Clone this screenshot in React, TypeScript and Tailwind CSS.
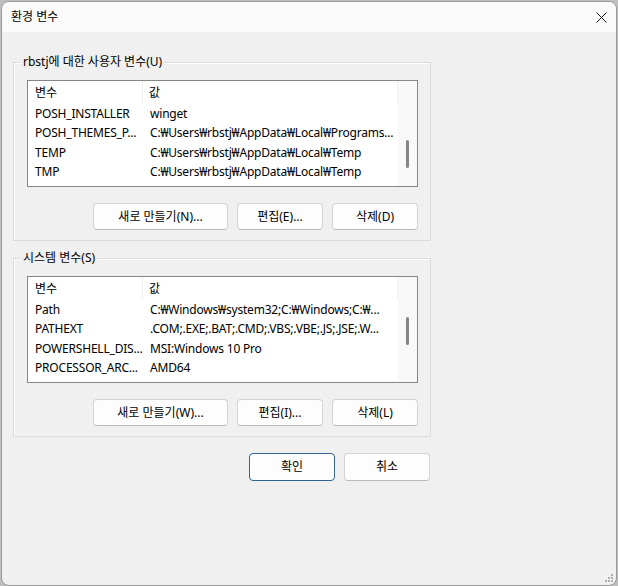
import React from "react";

const F = "font-['Noto_Sans','Noto_Sans_CJK_KR',sans-serif]";

type Row = [string, string];

function Btn({ label, w, primary }: { label: string; w: string; primary?: boolean }) {
  return (
    <div
      className={`${w} h-[27px] flex items-center justify-center rounded-[4px] bg-[#fdfdfd] text-[12px] text-black leading-none ${
        primary
          ? "border border-[#2f6391] shadow-[inset_0_0_0_1px_#ffffff]"
          : "border border-[#d3d3d3] border-b-[#bcbcbc]"
      }`}
    >
      {label}
    </div>
  );
}

function ListView({ rows, thumbTop }: { rows: Row[]; thumbTop: number }) {
  return (
    <div className="w-[391px] h-[107px] border border-[#868686] bg-white flex overflow-hidden">
      <div className="flex-1 flex flex-col">
        <div className="h-[23px] flex items-center text-[12px] text-black">
          <div className="w-[115px] h-full flex items-center pl-[7px] border-r border-[#f0f0f0]">변수</div>
          <div className="flex-1 h-full flex items-center pl-[6px] border-r border-[#f0f0f0]">값</div>
        </div>
        {rows.map(([k, v], i) => (
          <div key={i} className="h-[19.5px] flex items-center text-[12px] text-black whitespace-nowrap">
            <div className="w-[115px] shrink-0 pl-[7px] tracking-[-0.2px]">{k}</div>
            <div className="flex-1 pl-[7px] overflow-hidden tracking-[-0.2px]">{v}</div>
          </div>
        ))}
      </div>
      <div className="w-[19px] h-full bg-[#f8f8f8] flex flex-col items-center">
        <div className="w-[3px] rounded-full bg-[#858585]" style={{ marginTop: thumbTop, height: 28 }} />
      </div>
    </div>
  );
}

function Group({
  title,
  rows,
  thumbTop,
  buttons,
}: {
  title: string;
  rows: Row[];
  thumbTop: number;
  buttons: string[];
}) {
  return (
    <div className="relative w-[418px] h-[179px] border border-[#dadada] shadow-[inset_1px_1px_0_#ffffff] pl-[13px] pt-[17px]">
      <span className="absolute left-[7px] top-[-9px] px-[2px] bg-[#f0f0f0] text-[12px] leading-[16px] text-black">
        {title}
      </span>
      <ListView rows={rows} thumbTop={thumbTop} />
      <div className="mt-[16px] w-[391px] flex justify-end gap-[9px]">
        <Btn label={buttons[0]} w="w-[135px]" />
        <Btn label={buttons[1]} w="w-[86px]" />
        <Btn label={buttons[2]} w="w-[86px]" />
      </div>
    </div>
  );
}

export default function App() {
  const userRows: Row[] = [
    ["POSH_INSTALLER", "winget"],
    ["POSH_THEMES_P...", "C:₩Users₩rbstj₩AppData₩Local₩Programs..."],
    ["TEMP", "C:₩Users₩rbstj₩AppData₩Local₩Temp"],
    ["TMP", "C:₩Users₩rbstj₩AppData₩Local₩Temp"],
  ];
  const sysRows: Row[] = [
    ["Path", "C:₩Windows₩system32;C:₩Windows;C:₩..."],
    ["PATHEXT", ".COM;.EXE;.BAT;.CMD;.VBS;.VBE;.JS;.JSE;.W..."],
    ["POWERSHELL_DIS...", "MSI:Windows 10 Pro"],
    ["PROCESSOR_ARC...", "AMD64"],
  ];
  return (
    <div className={`w-[618px] h-[586px] bg-[#bfbfbf] pt-px pl-px ${F}`}>
      <div className="relative w-[616px] h-[585px] rounded-[8px] border border-[#9a9a9a] bg-[#f0f0f0] overflow-hidden flex flex-col">
        <div className="h-[30px] bg-[#fafafa] flex items-center justify-between pl-[9px] pr-[7px]">
          <span className="text-[12px] text-black leading-none">환경 변수</span>
          <svg width="11" height="11" viewBox="0 0 11 11" className="mr-[2px]">
            <path d="M0.5 0.5 L10.5 10.5 M10.5 0.5 L0.5 10.5" stroke="#1a1a1a" strokeWidth="1" fill="none" />
          </svg>
        </div>
        <div className="pl-[11px] pt-[30px] flex flex-col">
          <Group
            title="rbstj에 대한 사용자 변수(U)"
            rows={userRows}
            thumbTop={59}
            buttons={["새로 만들기(N)...", "편집(E)...", "삭제(D)"]}
          />
          <div className="h-[17px]" />
          <Group
            title="시스템 변수(S)"
            rows={sysRows}
            thumbTop={40}
            buttons={["새로 만들기(W)...", "편집(I)...", "삭제(L)"]}
          />
          <div className="mt-[16px] w-[418px] flex justify-end gap-[9px] pr-[1px]">
            <Btn label="확인" w="w-[86px] h-[28px]" primary />
            <Btn label="취소" w="w-[86px] h-[28px]" />
          </div>
        </div>
        <div className="absolute right-[3px] bottom-[3px] grid grid-cols-3 gap-[1px]">
          <span />
          <span />
          <span className="w-[2px] h-[2px] bg-[#b0b0b0]" />
          <span />
          <span className="w-[2px] h-[2px] bg-[#b0b0b0]" />
          <span className="w-[2px] h-[2px] bg-[#b0b0b0]" />
          <span className="w-[2px] h-[2px] bg-[#b0b0b0]" />
          <span className="w-[2px] h-[2px] bg-[#b0b0b0]" />
          <span className="w-[2px] h-[2px] bg-[#b0b0b0]" />
        </div>
      </div>
    </div>
  );
}
